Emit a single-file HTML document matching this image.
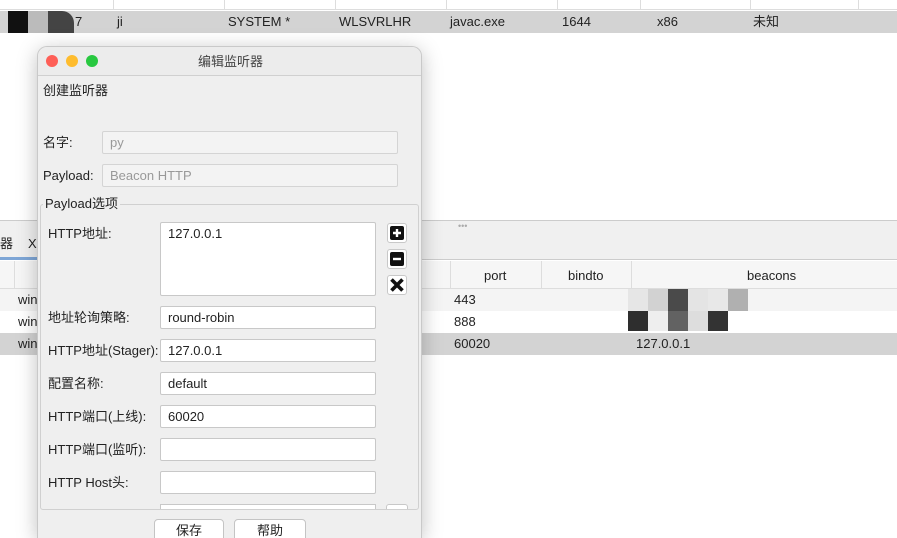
<!DOCTYPE html>
<html><head><meta charset="utf-8"><style>
*{box-sizing:border-box;margin:0;padding:0;line-height:16px}
html{width:897px;height:538px;overflow:hidden}
body{width:897px;height:538px;overflow:hidden;background:#fff;position:relative;font-family:"Liberation Sans","Noto Sans CJK SC",sans-serif;font-size:13px;color:#222}
.a{position:absolute}
.t{position:absolute;white-space:nowrap}
.inp{position:absolute;background:#fff;border:1px solid #c8c8c8;border-radius:2px;padding:3px 7px;font-size:13px}
.lbl{position:absolute;font-size:13px;color:#222;white-space:nowrap}
.ib{position:absolute;width:20px;height:20px;border:1px solid #c8c8c8;border-radius:3px;background:#fff}
.btn{position:absolute;height:24px;background:#fff;border:1px solid #c4c4c4;border-radius:4px;text-align:center;line-height:22px;font-size:13px}
</style></head><body>
<div class="a" style="left:0;top:0;width:897px;height:10px;background:#fff;border-bottom:1px solid #ddd"></div>
<div class="a" style="left:113px;top:0;width:1px;height:10px;background:#ddd"></div>
<div class="a" style="left:224px;top:0;width:1px;height:10px;background:#ddd"></div>
<div class="a" style="left:335px;top:0;width:1px;height:10px;background:#ddd"></div>
<div class="a" style="left:446px;top:0;width:1px;height:10px;background:#ddd"></div>
<div class="a" style="left:557px;top:0;width:1px;height:10px;background:#ddd"></div>
<div class="a" style="left:640px;top:0;width:1px;height:10px;background:#ddd"></div>
<div class="a" style="left:750px;top:0;width:1px;height:10px;background:#ddd"></div>
<div class="a" style="left:858px;top:0;width:1px;height:10px;background:#ddd"></div>
<div class="a" style="left:0;top:11px;width:897px;height:22px;background:#d3d3d3"></div>
<div class="a" style="left:8px;top:11px;width:20px;height:22px;background:#111"></div>
<div class="a" style="left:28px;top:11px;width:20px;height:22px;background:#bbb"></div>
<div class="a" style="left:48px;top:11px;width:26px;height:22px;background:#444;border-top-right-radius:12px"></div>
<div class="t" style="left:75px;top:14px">7</div>
<div class="t" style="left:117px;top:14px">ji</div>
<div class="t" style="left:228px;top:14px">SYSTEM *</div>
<div class="t" style="left:339px;top:14px">WLSVRLHR</div>
<div class="t" style="left:450px;top:14px">javac.exe</div>
<div class="t" style="left:562px;top:14px">1644</div>
<div class="t" style="left:657px;top:14px">x86</div>
<div class="t" style="left:753px;top:14px">未知</div>
<div class="a" style="left:0;top:220px;width:897px;height:40px;background:#f0f0f0;border-top:1px solid #ccc;border-bottom:1px solid #ccc"></div>
<div class="t" style="left:458px;top:218px;color:#aaa;font-size:9px">•••</div>
<div class="t" style="left:0;top:236px">器</div>
<div class="t" style="left:28px;top:236px">X</div>
<div class="a" style="left:0;top:257px;width:37px;height:3px;background:#7ea6d6"></div>
<div class="a" style="left:0;top:261px;width:897px;height:28px;background:#f6f6f6;border-bottom:1px solid #ddd"></div>
<div class="a" style="left:14px;top:261px;width:1px;height:28px;background:#ddd"></div>
<div class="a" style="left:450px;top:261px;width:1px;height:28px;background:#ddd"></div>
<div class="a" style="left:541px;top:261px;width:1px;height:28px;background:#ddd"></div>
<div class="a" style="left:631px;top:261px;width:1px;height:28px;background:#ddd"></div>
<div class="t" style="left:484px;top:268px">port</div>
<div class="t" style="left:568px;top:268px">bindto</div>
<div class="t" style="left:747px;top:268px">beacons</div>
<div class="a" style="left:0;top:289px;width:897px;height:22px;background:#f4f4f4"></div>
<div class="a" style="left:0;top:333px;width:897px;height:22px;background:#d3d3d3"></div>
<div class="t" style="left:18px;top:292px">win</div>
<div class="t" style="left:18px;top:314px">win</div>
<div class="t" style="left:18px;top:336px">win</div>
<div class="t" style="left:454px;top:292px">443</div>
<div class="t" style="left:454px;top:314px">888</div>
<div class="t" style="left:454px;top:336px">60020</div>
<div class="t" style="left:636px;top:336px">127.0.0.1</div>
<div class="a" style="left:628px;top:289px;width:20px;height:22px;background:#e6e6e6"></div>
<div class="a" style="left:648px;top:289px;width:20px;height:22px;background:#d2d2d2"></div>
<div class="a" style="left:668px;top:289px;width:20px;height:22px;background:#4a4a4a"></div>
<div class="a" style="left:688px;top:289px;width:20px;height:22px;background:#e4e4e4"></div>
<div class="a" style="left:708px;top:289px;width:20px;height:22px;background:#e8e8e8"></div>
<div class="a" style="left:728px;top:289px;width:20px;height:22px;background:#b0b0b0"></div>
<div class="a" style="left:628px;top:311px;width:20px;height:20px;background:#2e2e2e"></div>
<div class="a" style="left:648px;top:311px;width:20px;height:20px;background:#eee"></div>
<div class="a" style="left:668px;top:311px;width:20px;height:20px;background:#626262"></div>
<div class="a" style="left:688px;top:311px;width:20px;height:20px;background:#ddd"></div>
<div class="a" style="left:708px;top:311px;width:20px;height:20px;background:#333"></div>
<div class="a" style="left:37px;top:46px;width:385px;height:492px;background:#efefef;border:1px solid #c9c9c9;border-bottom:none;border-radius:10px 10px 0 0;box-shadow:0 4px 20px rgba(0,0,0,.25);overflow:hidden">
 <div class="a" style="left:0;top:0;width:385px;height:29px;background:#ececec;border-bottom:1px solid #d0d0d0"></div>
 <div class="a" style="left:8px;top:8px;width:12px;height:12px;border-radius:6px;background:#fe5f57"></div>
 <div class="a" style="left:28px;top:8px;width:12px;height:12px;border-radius:6px;background:#febc2e"></div>
 <div class="a" style="left:48px;top:8px;width:12px;height:12px;border-radius:6px;background:#28c840"></div>
 <div class="t" style="left:0;width:385px;text-align:center;top:7px;color:#444">编辑监听器</div>
</div>
<div class="t" style="left:43px;top:83px">创建监听器</div>
<div class="lbl" style="left:43px;top:135px">名字:</div>
<div class="inp" style="left:102px;top:131px;width:296px;height:23px;background:#f3f3f3;color:#999;border-color:#d4d4d4">py</div>
<div class="lbl" style="left:43px;top:168px">Payload:</div>
<div class="inp" style="left:102px;top:164px;width:296px;height:23px;background:#f3f3f3;color:#999;border-color:#d4d4d4">Beacon HTTP</div>
<div class="a" style="left:40px;top:204px;width:379px;height:306px;border:1px solid #d0d0d0;border-radius:3px"></div>
<div class="t" style="left:43px;top:196px;background:#efefef;padding:0 2px">Payload选项</div>
<div class="lbl" style="left:48px;top:226px">HTTP地址:</div>
<div class="inp" style="left:160px;top:222px;width:216px;height:74px">127.0.0.1</div>
<div class="ib" style="left:387px;top:223px"><svg width="18" height="18" viewBox="0 0 18 18"><rect x="2" y="2" width="14" height="14" rx="2" fill="#111"/><path d="M9 5v8M5 9h8" stroke="#fff" stroke-width="2.4"/></svg></div>
<div class="ib" style="left:387px;top:249px"><svg width="18" height="18" viewBox="0 0 18 18"><rect x="2" y="2" width="14" height="14" rx="2" fill="#111"/><path d="M5 9h8" stroke="#fff" stroke-width="2.4"/></svg></div>
<div class="ib" style="left:387px;top:275px"><svg width="18" height="18" viewBox="0 0 18 18"><path d="M3.5 3.5l11 11M14.5 3.5l-11 11" stroke="#111" stroke-width="3.6"/></svg></div>
<div class="lbl" style="left:48px;top:310px">地址轮询策略:</div>
<div class="inp" style="left:160px;top:306px;width:216px;height:23px">round-robin</div>
<div class="lbl" style="left:48px;top:343px">HTTP地址(Stager):</div>
<div class="inp" style="left:160px;top:339px;width:216px;height:23px">127.0.0.1</div>
<div class="lbl" style="left:48px;top:376px">配置名称:</div>
<div class="inp" style="left:160px;top:372px;width:216px;height:23px">default</div>
<div class="lbl" style="left:48px;top:409px">HTTP端口(上线):</div>
<div class="inp" style="left:160px;top:405px;width:216px;height:23px">60020</div>
<div class="lbl" style="left:48px;top:442px">HTTP端口(监听):</div>
<div class="inp" style="left:160px;top:438px;width:216px;height:23px"></div>
<div class="lbl" style="left:48px;top:475px">HTTP Host头:</div>
<div class="inp" style="left:160px;top:471px;width:216px;height:23px"></div>
<div class="a" style="left:160px;top:504px;width:216px;height:5px;background:#fff;border:1px solid #c8c8c8;border-bottom:none"></div>
<div class="a" style="left:386px;top:504px;width:22px;height:5px;background:#fff;border:1px solid #c8c8c8;border-bottom:none;border-radius:3px 3px 0 0"></div>
<div class="btn" style="left:154px;top:519px;width:70px">保存</div>
<div class="btn" style="left:234px;top:519px;width:72px">帮助</div>
</body></html>
